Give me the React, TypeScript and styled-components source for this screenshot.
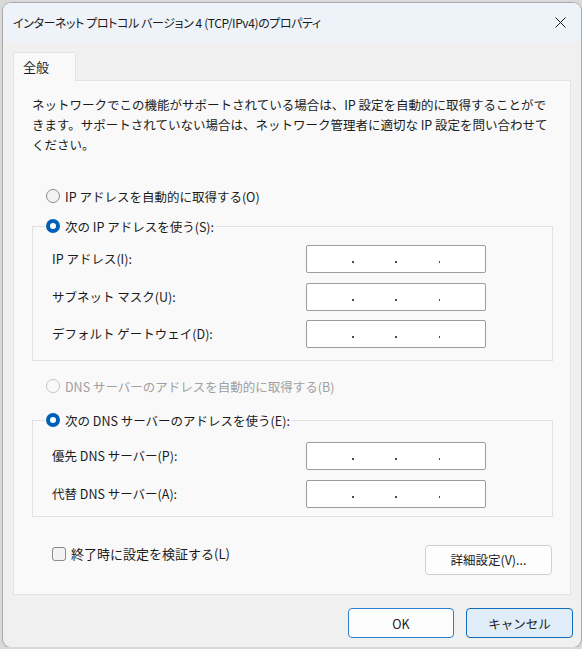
import styled, { createGlobalStyle } from 'styled-components';

const GlobalStyle = createGlobalStyle`
  html, body {
    margin: 0;
    padding: 0;
  }
  body {
    background: #d9d9d9;
    font-family: "Noto Sans CJK JP", "Noto Sans", sans-serif;
    color: #1b1b1b;
  }
`;

const S = {
  Window: styled.div`
    box-sizing: border-box;
    width: 578px;
    height: 644px;
    margin: 3px 0 0 3px;
    border-radius: 8px;
    box-shadow: 0 0 0 1px #a9a9a9;
    background: #f0f0f0;
    overflow: hidden;
    display: flex;
    flex-direction: column;
  `,
  TitleBar: styled.div`
    flex: none;
    height: 39px;
    padding: 0 15px 0 10px;
    background: #eef3f9;
    display: flex;
    align-items: center;
    justify-content: space-between;
    font-size: 12px;
    letter-spacing: -0.4px;
    font-feature-settings: 'palt';
  `,
  Body: styled.div`
    padding: 10px 10px 0 10px;
  `,
  Tab: styled.div`
    position: relative;
    z-index: 1;
    box-sizing: border-box;
    width: 63px;
    height: 29px;
    margin-bottom: -1px;
    padding-left: 9px;
    border: 1px solid #e3e3e3;
    border-bottom: none;
    border-radius: 2px 2px 0 0;
    background: #f9f9f9;
    font-size: 13px;
    line-height: 28px;
  `,
  Panel: styled.div`
    box-sizing: border-box;
    height: 515px;
    padding: 14px 17px 0 18px;
    border: 1px solid #e3e3e3;
    background: #f9f9f9;
    font-size: 12.5px;
  `,
  Description: styled.p`
    margin: 0;
    line-height: 20px;
  `,
  RadioRow: styled.label<{ $top?: number; $disabled?: boolean }>`
    display: flex;
    align-items: center;
    gap: 5px;
    height: 20px;
    margin-top: ${({ $top }) => $top ?? 0}px;
    padding-left: 14px;
    color: ${({ $disabled }) => ($disabled ? '#a0a0a0' : 'inherit')};
  `,
  Radio: styled.span<{ $checked?: boolean; $disabled?: boolean }>`
    box-sizing: border-box;
    width: 14px;
    height: 14px;
    border-radius: 50%;
    border: ${({ $checked, $disabled }) =>
      $checked ? '4px solid #005fb8' : `1px solid ${$disabled ? '#c6c6c6' : '#8a8a8a'}`};
    background: ${({ $checked, $disabled }) => ($checked ? '#fff' : $disabled ? '#f9f9f9' : '#f3f3f3')};
  `,
  Group: styled.fieldset<{ $top: number }>`
    margin: ${({ $top }) => $top}px 0 0 0;
    padding: 0;
    width: 521px;
    box-sizing: border-box;
    border: 1px solid #e1e1e1;
    min-inline-size: 0;
  `,
  Legend: styled.legend`
    margin-left: 12px;
    padding: 0 2px 0 1px;
  `,
  LegendRow: styled.span`
    display: flex;
    align-items: center;
    gap: 5px;
    height: 20px;
  `,
  Fields: styled.div<{ $pt: number; $pb: number }>`
    display: grid;
    grid-template-columns: 254px 180px;
    row-gap: 9.5px;
    align-items: center;
    padding: ${({ $pt, $pb }) => `${$pt}px 0 ${$pb}px 19px`};
  `,
  FieldLabel: styled.span`
    line-height: 20px;
  `,
  IpBox: styled.div`
    box-sizing: border-box;
    height: 28px;
    padding: 0 4px;
    border: 1px solid #9d9d9d;
    border-radius: 2px;
    background: #fff;
    display: flex;
    align-items: center;
    justify-content: center;
  `,
  Octet: styled.span`
    width: 40px;
  `,
  Dot: styled.span`
    width: 2px;
    height: 2px;
    margin: 6px 1px 0;
    background: #3d4d66;
  `,
  BottomRow: styled.div`
    box-sizing: border-box;
    display: flex;
    justify-content: space-between;
    align-items: flex-start;
    width: 520px;
    margin-top: 28px;
    padding-left: 20px;
  `,
  CheckLabel: styled.label`
    display: flex;
    align-items: center;
    gap: 5px;
    height: 16px;
    margin-top: 1px;
    font-size: 13px;
  `,
  CheckBox: styled.span`
    box-sizing: border-box;
    width: 14px;
    height: 14px;
    border: 1px solid #8a8a8a;
    border-radius: 3px;
    background: #f3f3f3;
  `,
  Button: styled.button<{ $variant?: 'plain' | 'accent' | 'focus'; $width: number }>`
    box-sizing: border-box;
    width: ${({ $width }) => $width}px;
    height: 30px;
    padding: 0;
    border-radius: 4px;
    font-family: inherit;
    font-size: 12.5px;
    color: #1b1b1b;
    border: 1px solid
      ${({ $variant }) => ($variant === 'plain' ? '#d0d0d0' : $variant === 'accent' ? '#2f7fd0' : '#0f6cbd')};
    background: ${({ $variant }) => ($variant === 'focus' ? '#e0ecf8' : '#fdfdfd')};
  `,
  Footer: styled.div`
    display: flex;
    justify-content: flex-end;
    gap: 12px;
    padding: 13px 8px 0 0;
  `,
};

function CloseIcon() {
  return (
    <svg width="11" height="11" viewBox="0 0 11 11" aria-hidden>
      <path d="M0.5 0.5L10.5 10.5M10.5 0.5L0.5 10.5" stroke="#1a1a1a" strokeWidth="1" fill="none" />
    </svg>
  );
}

function IpInput() {
  return (
    <S.IpBox>
      <S.Octet />
      <S.Dot />
      <S.Octet />
      <S.Dot />
      <S.Octet />
      <S.Dot />
      <S.Octet />
    </S.IpBox>
  );
}

function FieldRows({ labels, pt, pb }: { labels: string[]; pt: number; pb: number }) {
  return (
    <S.Fields $pt={pt} $pb={pb}>
      {labels.flatMap((label) => [
        <S.FieldLabel key={label}>{label}</S.FieldLabel>,
        <IpInput key={label + '-input'} />,
      ])}
    </S.Fields>
  );
}

export default function App() {
  return (
    <>
      <GlobalStyle />
      <S.Window>
        <S.TitleBar>
          <span>インターネット プロトコル バージョン 4 (TCP/IPv4)のプロパティ</span>
          <CloseIcon />
        </S.TitleBar>
        <S.Body>
          <S.Tab>全般</S.Tab>
          <S.Panel>
            <S.Description>
              ネットワークでこの機能がサポートされている場合は、IP 設定を自動的に取得することがで
              <br />
              きます。サポートされていない場合は、ネットワーク管理者に適切な IP 設定を問い合わせて
              <br />
              ください。
            </S.Description>

            <S.RadioRow $top={31}>
              <S.Radio />
              IP アドレスを自動的に取得する(O)
            </S.RadioRow>
            <S.Group $top={10}>
              <S.Legend>
                <S.LegendRow>
                  <S.Radio $checked />
                  次の IP アドレスを使う(S):
                </S.LegendRow>
              </S.Legend>
              <FieldRows labels={['IP アドレス(I):', 'サブネット マスク(U):', 'デフォルト ゲートウェイ(D):']} pt={9} pb={12} />
            </S.Group>

            <S.RadioRow $top={15} $disabled>
              <S.Radio $disabled />
              DNS サーバーのアドレスを自動的に取得する(B)
            </S.RadioRow>
            <S.Group $top={14}>
              <S.Legend>
                <S.LegendRow>
                  <S.Radio $checked />
                  次の DNS サーバーのアドレスを使う(E):
                </S.LegendRow>
              </S.Legend>
              <FieldRows labels={['優先 DNS サーバー(P):', '代替 DNS サーバー(A):']} pt={12} pb={8} />
            </S.Group>

            <S.BottomRow>
              <S.CheckLabel>
                <S.CheckBox />
                終了時に設定を検証する(L)
              </S.CheckLabel>
              <S.Button $variant="plain" $width={127}>
                詳細設定(V)...
              </S.Button>
            </S.BottomRow>
          </S.Panel>
        </S.Body>
        <S.Footer>
          <S.Button $variant="accent" $width={106}>
            OK
          </S.Button>
          <S.Button $variant="focus" $width={107}>
            キャンセル
          </S.Button>
        </S.Footer>
      </S.Window>
    </>
  );
}
